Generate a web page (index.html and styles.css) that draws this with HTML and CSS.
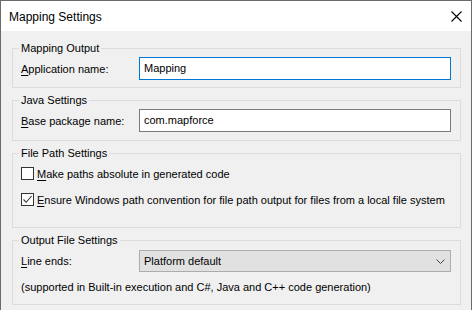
FILE: index.html
```html
<!DOCTYPE html>
<html>
<head>
<meta charset="utf-8">
<link rel="stylesheet" href="styles.css">
</head>
<body>
<div class="window">
  <div class="titlebar">
    <span class="title">Mapping Settings</span>
    <svg class="close" width="11" height="11" viewBox="0 0 11 11"><path d="M0.5 0.5 L10.5 10.5 M10.5 0.5 L0.5 10.5" stroke="#000" stroke-width="1.1" fill="none"/></svg>
  </div>
  <div class="content">
    <fieldset class="group g1">
      <legend>Mapping Output</legend>
      <div class="row">
        <label class="lbl"><u>A</u>pplication name:</label>
        <div class="input focused">Mapping</div>
      </div>
    </fieldset>
    <fieldset class="group g2">
      <legend>Java Settings</legend>
      <div class="row">
        <label class="lbl"><u>B</u>ase package name:</label>
        <div class="input">com.mapforce</div>
      </div>
    </fieldset>
    <fieldset class="group g3">
      <legend>File Path Settings</legend>
      <div class="check">
        <span class="box"></span>
        <span><u>M</u>ake paths absolute in generated code</span>
      </div>
      <div class="check">
        <span class="box"><svg width="11" height="11" viewBox="0 0 11 11"><path d="M1.5 5.5 L4.2 8.3 L9.6 2" stroke="#333" stroke-width="1.1" fill="none"/></svg></span>
        <span><u>E</u>nsure Windows path convention for file path output for files from a local file system</span>
      </div>
    </fieldset>
    <fieldset class="group g4">
      <legend>Output File Settings</legend>
      <div class="row">
        <label class="lbl"><u>L</u>ine ends:</label>
        <div class="select">
          <span>Platform default</span>
          <svg class="chev" width="9" height="5" viewBox="0 0 9 5"><path d="M0.5 0.5 L4.5 4.5 L8.5 0.5" stroke="#444" stroke-width="1" fill="none"/></svg>
        </div>
      </div>
      <div class="note">(supported in Built-in execution and C#, Java and C++ code generation)</div>
    </fieldset>
  </div>
</div>
</body>
</html>
```

FILE: styles.css
```css
* { box-sizing: border-box; }
html, body { margin: 0; padding: 0; }
body {
  font-family: "Liberation Sans", Arial, sans-serif;
  font-size: 11px;
  color: #000;
  background: #f0f0f0;
  white-space: nowrap;
}
.window {
  width: 472px;
  height: 310px;
  border: 1px solid #6b6b6b;
  border-bottom: none;
  background: #f0f0f0;
  overflow: hidden;
}
.titlebar {
  height: 30px;
  background: #fff;
  display: flex;
  align-items: center;
  justify-content: space-between;
  padding: 0 9px 0 8px;
}
.title { font-size: 12px; padding-top: 1px; }
.close { display: block; }
.content {
  padding: 10px 10px 0 11px;
  display: flex;
  flex-direction: column;
  gap: 5px;
}
.group {
  margin: 0;
  border: 1px solid #dcdcdc;
  padding: 1px 9px 0 8px;
  min-width: 0;
}
.group legend {
  padding: 0 2px;
  margin-left: -2px;
  line-height: 15px;
  height: 15px;
}
.row {
  display: flex;
  align-items: center;
}
.lbl { width: 118px; flex: none; }
u { text-decoration-thickness: 1px; text-underline-offset: 2px; }
.input {
  flex: 1;
  height: 23px;
  background: #fff;
  border: 1px solid #7a7a7a;
  padding: 0 4px;
  line-height: 21px;
}
.input.focused { border-color: #0078d7; }
.g1 { padding-bottom: 7px; }
.g2 { padding-bottom: 8px; }
.g3 { padding-top: 6px; padding-bottom: 21px; }
.check {
  display: flex;
  align-items: center;
  gap: 3px;
  height: 13px;
}
.check + .check { margin-top: 13px; }
.box {
  width: 13px;
  height: 13px;
  border: 1px solid #333;
  background: #fff;
  flex: none;
  display: flex;
  align-items: center;
  justify-content: center;
}
.box svg { display: block; }
.g4 { padding-top: 2px; padding-bottom: 9px; }
.select {
  flex: 1;
  height: 22px;
  background: #e1e1e1;
  border: 1px solid #adadad;
  display: flex;
  align-items: center;
  justify-content: space-between;
  padding: 0 5px 0 4px;
}
.chev { display: block; }
.note { margin-top: 8px; line-height: 15px; }
```
